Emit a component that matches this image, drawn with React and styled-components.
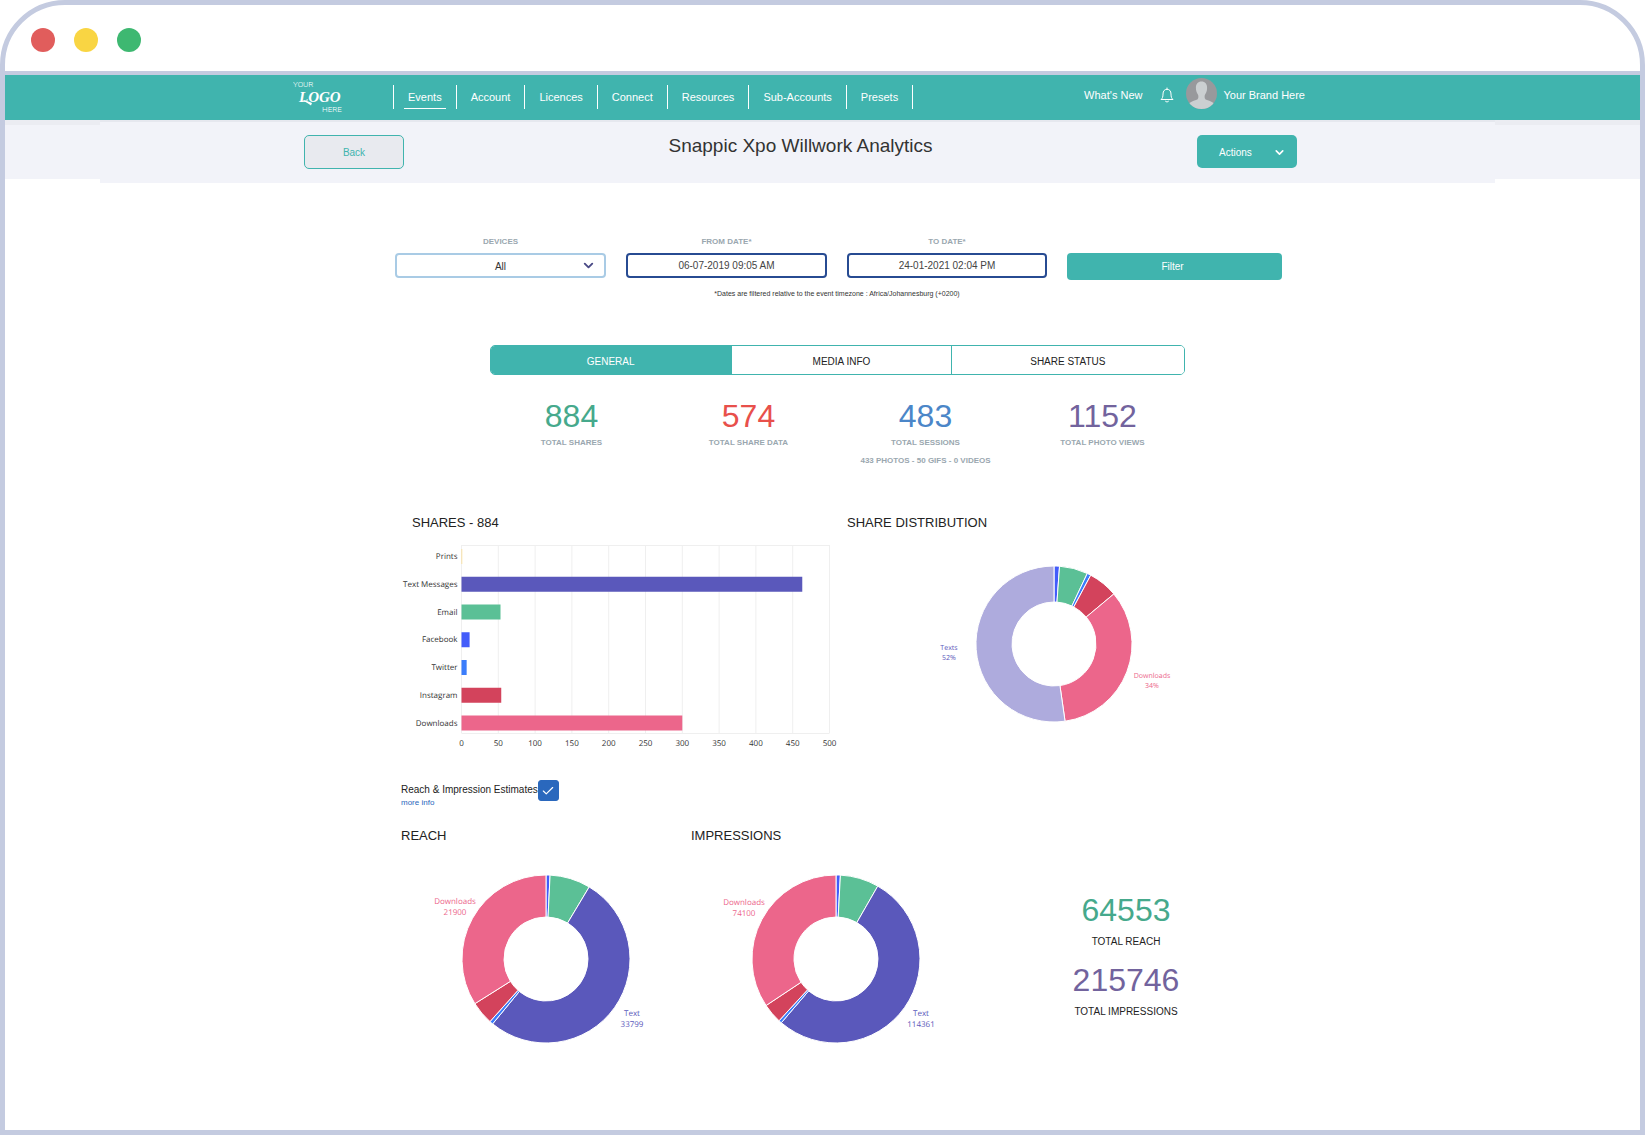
import React from "react";
import styled, { createGlobalStyle } from "styled-components";
import { Check, ChevronDown } from "lucide-react";

const GlobalStyle = createGlobalStyle`
  *,
  *::before,
  *::after {
    box-sizing: border-box;
  }
  body {
    margin: 0;
    background-color: white;
    color: #333;
    font-family: "Liberation Sans", Arial, sans-serif;
    font-size: 10px;
  }
  button,
  input,
  select {
    font: inherit;
  }
`;

const Frame = styled.div`
  display: flex;
  flex-direction: column;
  min-height: 100vh;
  border: 5px solid #c4cbe0;
  border-radius: 65px 65px 0 0;
  background-color: white;
`;

const WindowBar = styled.div`
  display: flex;
  align-items: center;
  column-gap: 19px;
  height: 70px;
  padding: 4px 0 0 26px;
  border-bottom: 4px solid #c4cbe0;
`;

const Dot = styled.span`
  width: 24px;
  height: 24px;
  border-radius: 100rem;
  background-color: ${(props) => props.$color};
`;

const Header = styled.header`
  background-color: #40b4ae;
  color: white;
  font-size: 11px;
`;

const HeaderInner = styled.div`
  display: flex;
  align-items: flex-start;
  max-width: 1059px;
  height: 45px;
  margin: 0 auto;
  padding: 3px 47px 0 0;
`;

const Logo = styled.svg`
  display: block;
  width: 50px;
  height: 36px;
  margin-right: 50px;
  flex-shrink: 0;
`;

const NavList = styled.ul`
  display: flex;
  margin: 7px 0 0;
  padding: 0;
  list-style: none;
  border-right: 1px solid white;
`;

const NavItem = styled.li`
  padding: 0 10px;
  border-left: 1px solid white;
`;

const NavLink = styled.a`
  display: block;
  height: 24px;
  padding: 0 4px;
  line-height: 24px;
  color: white;
  text-decoration: none;
  white-space: nowrap;
  border-bottom: 1px solid ${(props) => (props.$active ? "white" : "transparent")};
`;

const UserArea = styled.div`
  display: flex;
  align-items: center;
  margin-left: auto;
  white-space: nowrap;
`;

const TopLink = styled.a`
  padding-top: 2px;
  color: white;
  text-decoration: none;
`;

const IconButton = styled.button`
  display: flex;
  margin: 0 12px 0 18px;
  padding: 2px 0 0;
  border: 0;
  background: none;
  color: white;
`;

const Avatar = styled.svg`
  display: block;
  width: 31px;
  height: 31px;
  margin-right: 6px;
`;

const SubHeader = styled.div`
  display: grid;
  grid-template-columns: 95px 1fr 145px;
  align-items: start;
`;

const SubHeaderSide = styled.div`
  height: 59px;
  border-top: 5px solid #ebecf2;
  background-color: #f2f3f9;
`;

const SubHeaderMain = styled.div`
  padding: 13px 17px 14px 23px;
  border-top: 2px solid #e6e8ef;
  background-color: #f2f3f9;
`;

const SubHeaderRow = styled.div`
  display: grid;
  grid-template-columns: 100px 1fr 100px;
  align-items: start;
  max-width: 993px;
  margin: 0 auto;
`;

const PageTitle = styled.h1`
  margin: 0;
  font-size: 19px;
  font-weight: 300;
  line-height: 22px;
  text-align: center;
`;

const BackButton = styled.button`
  height: 34px;
  border: 1px solid #40b4ae;
  border-radius: 5px;
  background-color: #e8eaef;
  color: #40b4ae;
`;

const ActionsButton = styled.button`
  display: flex;
  align-items: center;
  justify-content: space-between;
  height: 33px;
  padding: 2px 11px 0 22px;
  border: 0;
  border-radius: 5px;
  background-color: #40b4ae;
  color: white;
`;

const Main = styled.main`
  width: 100%;
  max-width: 919px;
  margin: 0 auto;
  padding: 52px 0 50px 32px;
`;

const Filters = styled.form`
  display: grid;
  grid-template-columns: 211fr 201fr 200fr 215fr;
  column-gap: 20px;
  align-items: start;
`;

const Field = styled.div`
  display: flex;
  flex-direction: column;
  row-gap: 5px;
`;

const FieldLabel = styled.label`
  padding-top: 1px;
  font-size: 8px;
  font-weight: bold;
  line-height: 12px;
  color: #9aa7af;
  text-align: center;
`;

const TextInput = styled.input`
  width: 100%;
  height: 25px;
  padding: 0 8px;
  border: 2px solid #274b92;
  border-radius: 4px;
  background-color: white;
  color: #444;
  text-align: center;
`;

const SelectBox = styled.div`
  display: grid;
  align-items: center;

  > * {
    grid-area: 1 / 1;
  }

  svg {
    justify-self: end;
    margin-right: 10px;
    pointer-events: none;
  }
`;

const Select = styled.select`
  width: 100%;
  height: 25px;
  padding: 2px 8px 0;
  appearance: none;
  border: 2px solid #a9cbe5;
  border-radius: 4px;
  background-color: white;
  color: #333;
  text-align: center;
  text-align-last: center;
`;

const FilterButton = styled.button`
  height: 27px;
  margin-top: 18px;
  padding: 0 4px 0 0;
  border: 0;
  border-radius: 4px;
  background-color: #40b4ae;
  color: white;
`;

const Summary = styled.div`
  padding-right: 3px;
`;

const Note = styled.p`
  margin: 9px 0 0;
  font-size: 7px;
  line-height: 10px;
  text-align: center;
`;

const Tabs = styled.div`
  display: grid;
  grid-template-columns: 241fr 221fr 233fr;
  max-width: 695px;
  margin: 46px auto 0;
  border: 1px solid #40b4ae;
  border-radius: 5px;
  overflow: hidden;
`;

const Tab = styled.button`
  height: 28px;
  padding: 2px 0 0;
  border: 0;
  border-left: 1px solid #40b4ae;
  background-color: ${(props) => (props.$active ? "#40b4ae" : "white")};
  color: ${(props) => (props.$active ? "white" : "#222")};

  &:first-child {
    border-left: 0;
  }
`;

const Stats = styled.div`
  display: grid;
  grid-template-columns: repeat(4, 1fr);
  max-width: 708px;
  min-height: 69px;
  margin: 23px auto 0;
  text-align: center;
`;

const Amount = styled.div`
  font-size: 32px;
  line-height: 36px;
  color: ${(props) => props.$color};
`;

const StatLabel = styled.div`
  margin-top: 3px;
  font-size: 8px;
  font-weight: bold;
  line-height: 12px;
  color: #9aa7af;
`;

const StatDetail = styled(StatLabel)`
  margin-top: 6px;
`;

const ChartRow = styled.div`
  display: grid;
  grid-template-columns: 452fr 435fr;
  margin-top: 48px;
`;

const SectionTitle = styled.h2`
  margin: 0;
  padding-left: ${(props) => (props.$inset ? "17px" : "0")};
  font-size: 13px;
  font-weight: normal;
  line-height: 16px;
  color: #222;
`;

const Chart = styled.svg`
  display: block;
  overflow: visible;
  font-family: "Open Sans", "Noto Sans", sans-serif;
  font-size: ${(props) => (props.$small ? "7px" : "8px")};
  text-rendering: geometricPrecision;
`;

const Estimates = styled.div`
  display: flex;
  align-items: flex-start;
  margin-top: 25px;
  padding-left: 6px;
`;

const EstimatesText = styled.div`
  display: flex;
  flex-direction: column;
  padding-top: 2px;
`;

const EstimatesLabel = styled.label`
  line-height: 16px;
  color: #222;
`;

const MoreLink = styled.a`
  font-size: 8px;
  line-height: 10px;
  color: #2a68bd;
  text-decoration: none;
`;

const CheckBox = styled.div`
  display: grid;
  place-items: center;

  > * {
    grid-area: 1 / 1;
  }

  svg {
    color: white;
    pointer-events: none;
  }

  input:not(:checked) + svg {
    display: none;
  }
`;

const CheckInput = styled.input`
  width: 21px;
  height: 21px;
  margin: 0;
  appearance: none;
  border: 1px solid #2a68bd;
  border-radius: 3px;

  &:checked {
    background-color: #2a68bd;
  }
`;

const ReachRow = styled.div`
  display: grid;
  grid-template-columns: 290fr 290fr 290fr;
  margin-top: 20px;
  padding: 0 11px 0 6px;
`;

const Totals = styled.div`
  display: flex;
  flex-direction: column;
  row-gap: 14px;
  padding-top: 64px;
  text-align: center;
`;

const TotalLabel = styled.div`
  margin-top: 8px;
  line-height: 12px;
  color: #222;
`;

const colors = {
  prints: "#fbdc8c",
  texts: "#5a58bb",
  textsLight: "#aeabdd",
  email: "#5bc096",
  facebook: "#435cfa",
  twitter: "#3b7dfb",
  instagram: "#d3435c",
  downloads: "#ec668b",
};

const navLinks = [
  "Events",
  "Account",
  "Licences",
  "Connect",
  "Resources",
  "Sub-Accounts",
  "Presets",
];

const stats = [
  { value: 884, label: "TOTAL SHARES", color: "#46a98c" },
  { value: 574, label: "TOTAL SHARE DATA", color: "#e8504b" },
  {
    value: 483,
    label: "TOTAL SESSIONS",
    color: "#4b86c8",
    detail: "433 PHOTOS - 50 GIFS - 0 VIDEOS",
  },
  { value: 1152, label: "TOTAL PHOTO VIEWS", color: "#72639d" },
];

const bars = [
  { name: "Prints", value: 1, color: colors.prints },
  { name: "Text Messages", value: 463, color: colors.texts },
  { name: "Email", value: 53, color: colors.email },
  { name: "Facebook", value: 11, color: colors.facebook },
  { name: "Twitter", value: 7, color: colors.twitter },
  { name: "Instagram", value: 54, color: colors.instagram },
  { name: "Downloads", value: 300, color: colors.downloads },
];

const distribution = [
  { value: 10, color: colors.facebook },
  { value: 52, color: colors.email },
  { value: 7, color: colors.twitter },
  { value: 54, color: colors.instagram },
  { value: 299, color: colors.downloads },
  { value: 462, color: colors.textsLight },
];

const reach = [
  { value: 500, color: colors.facebook },
  { value: 5050, color: colors.email },
  { value: 33799, color: colors.texts },
  { value: 430, color: colors.twitter },
  { value: 2874, color: colors.instagram },
  { value: 21900, color: colors.downloads },
];

const impressions = [
  { value: 1800, color: colors.facebook },
  { value: 16060, color: colors.email },
  { value: 114361, color: colors.texts },
  { value: 1250, color: colors.twitter },
  { value: 8175, color: colors.instagram },
  { value: 74100, color: colors.downloads },
];

const point = (cx, cy, r, turn) => {
  const a = turn * Math.PI * 2;
  return `${(cx + r * Math.sin(a)).toFixed(2)} ${(cy - r * Math.cos(a)).toFixed(2)}`;
};

const slicePath = (cx, cy, outer, inner, from, to) => {
  const large = to - from > 0.5 ? 1 : 0;
  return [
    `M${point(cx, cy, outer, from)}`,
    `A${outer} ${outer} 0 ${large} 1 ${point(cx, cy, outer, to)}`,
    `L${point(cx, cy, inner, to)}`,
    `A${inner} ${inner} 0 ${large} 0 ${point(cx, cy, inner, from)}Z`,
  ].join("");
};

const Donut = ({ data, cx, cy, outer, inner, width, height, labels, small, title }) => {
  const total = data.reduce((sum, item) => sum + item.value, 0);
  const lineHeight = small ? 10 : 11;
  let turn = 0;

  return (
    <Chart width={width} height={height} $small={small} role="img" aria-label={title}>
      {data.map((item) => {
        const from = turn;
        turn += item.value / total;
        return (
          <path
            key={item.color}
            d={slicePath(cx, cy, outer, inner, from, turn)}
            fill={item.color}
            stroke="white"
            strokeWidth="1"
          />
        );
      })}
      {labels.map((label) => (
        <text key={label.name} fill={label.color} textAnchor="middle">
          <tspan x={label.x} y={label.y}>
            {label.name}
          </tspan>
          <tspan x={label.x} y={label.y + lineHeight}>
            {label.value}
          </tspan>
        </text>
      ))}
    </Chart>
  );
};

const BarChart = () => {
  const left = 66.5;
  const top = 14;
  const plotWidth = 368;
  const plotHeight = 188;
  const ticks = Array.from({ length: 11 }, (_, i) => i * 50);
  const scale = (value) => (value / 500) * plotWidth;

  return (
    <Chart width="450" height="224" role="img" aria-label="Shares by channel">
      <path
        d={`M${left} ${top + 0.5}h${plotWidth}M${left} ${top + plotHeight + 0.5}h${plotWidth}`}
        stroke="#efefef"
      />
      {ticks.map((tick) => (
        <g key={tick}>
          <line
            x1={left + scale(tick)}
            x2={left + scale(tick)}
            y1={top}
            y2={top + plotHeight}
            stroke="#efefef"
          />
          <text x={left + scale(tick)} y="215" textAnchor="middle" fill="#333">
            {tick}
          </text>
        </g>
      ))}
      {bars.map((bar, i) => {
        const y = top + 4 + i * 27.75;
        return (
          <g key={bar.name}>
            <rect x={left} y={y} width={scale(bar.value)} height="15" fill={bar.color} />
            <text x={left - 4} y={y + 10} textAnchor="end" fill="#333">
              {bar.name}
            </text>
          </g>
        );
      })}
    </Chart>
  );
};

const BrandLogo = () => (
  <Logo viewBox="0 0 50 36" role="img" aria-label="Your logo here" fill="white">
    <text x="0" y="9" fontFamily="Roboto, sans-serif" fontSize="8" fontWeight="300">
      YOUR
    </text>
    <text
      x="6"
      y="24"
      fontFamily="'Liberation Serif', serif"
      fontSize="15"
      fontWeight="bold"
      fontStyle="italic"
    >
      LOGO
    </text>
    <path d="M7 22.500c3-1 5 1 11 5l1-2.500c-4-1-7-4-12-2.500z" />
    <text x="29" y="34" fontFamily="Roboto, sans-serif" fontSize="8" fontWeight="300">
      HERE
    </text>
  </Logo>
);

const BellIcon = () => (
  <svg width="14" height="16" viewBox="0 0 14 16" fill="none" stroke="currentColor">
    <path d="M1 12.5h12c-1.500-1.300-2-2.600-2-5.500 0-3-1.600-4.700-4-4.700S3 4 3 7c0 2.900-.5 4.200-2 5.500z" />
    <path d="M7 2.300V1M5.500 14.300c.8.900 2.200.9 3 0" strokeLinecap="round" />
  </svg>
);

const UserAvatar = () => (
  <Avatar viewBox="0 0 31 31" aria-hidden="true">
    <defs>
      <clipPath id="avatar-clip">
        <circle cx="15.500" cy="15.500" r="15.500" />
      </clipPath>
    </defs>
    <g clipPath="url(#avatar-clip)">
      <rect width="31" height="31" fill="#98999c" />
      <path
        d="M15.500 3.500c3.600 0 5.700 2.600 5.600 6.500-.1 3.300-1 5.300-2.300 6.900-.5 2.900-.1 4.300 2.200 5.200 3.200 1.200 6 2 7.500 3.900V31h-26v-5c1.500-1.900 4.300-2.700 7.500-3.900 2.300-.9 2.700-2.300 2.200-5.200-1.300-1.600-2.200-3.600-2.300-6.900-.1-3.900 2-6.500 5.600-6.500z"
        fill="#cbcfd1"
      />
    </g>
  </Avatar>
);

const App = () => {
  return (
    <>
      <GlobalStyle />
      <Frame>
        <WindowBar>
          <Dot $color="#e15d5c" />
          <Dot $color="#f9d543" />
          <Dot $color="#3eb871" />
        </WindowBar>

        <Header>
          <HeaderInner>
            <BrandLogo />
            <nav>
              <NavList>
                {navLinks.map((name, i) => (
                  <NavItem key={name}>
                    <NavLink href="#" $active={i === 0}>
                      {name}
                    </NavLink>
                  </NavItem>
                ))}
              </NavList>
            </nav>
            <UserArea>
              <TopLink href="#">What's New</TopLink>
              <IconButton type="button" aria-label="Notifications">
                <BellIcon />
              </IconButton>
              <UserAvatar />
              <TopLink href="#">Your Brand Here</TopLink>
            </UserArea>
          </HeaderInner>
        </Header>

        <SubHeader>
          <SubHeaderSide />
          <SubHeaderMain>
            <SubHeaderRow>
              <BackButton type="button">Back</BackButton>
              <PageTitle>Snappic Xpo Willwork Analytics</PageTitle>
              <ActionsButton type="button">
                Actions
                <ChevronDown size={13} strokeWidth={3} />
              </ActionsButton>
            </SubHeaderRow>
          </SubHeaderMain>
          <SubHeaderSide />
        </SubHeader>

        <Main>
          <Filters onSubmit={(e) => e.preventDefault()}>
            <Field>
              <FieldLabel htmlFor="devices">DEVICES</FieldLabel>
              <SelectBox>
                <Select id="devices">
                  <option>All</option>
                </Select>
                <ChevronDown size={15} strokeWidth={3} color="#4a4a86" />
              </SelectBox>
            </Field>
            <Field>
              <FieldLabel htmlFor="from">FROM DATE*</FieldLabel>
              <TextInput id="from" type="text" defaultValue="06-07-2019 09:05 AM" />
            </Field>
            <Field>
              <FieldLabel htmlFor="to">TO DATE*</FieldLabel>
              <TextInput id="to" type="text" defaultValue="24-01-2021 02:04 PM" />
            </Field>
            <FilterButton type="submit">Filter</FilterButton>
          </Filters>

          <Summary>
            <Note>
              *Dates are filtered relative to the event timezone : Africa/Johannesburg (+0200)
            </Note>

            <Tabs>
              <Tab type="button" $active>
                GENERAL
              </Tab>
              <Tab type="button">MEDIA INFO</Tab>
              <Tab type="button">SHARE STATUS</Tab>
            </Tabs>

            <Stats>
              {stats.map((stat) => (
                <div key={stat.label}>
                  <Amount $color={stat.color}>{stat.value}</Amount>
                  <StatLabel>{stat.label}</StatLabel>
                  {stat.detail && <StatDetail>{stat.detail}</StatDetail>}
                </div>
              ))}
            </Stats>
          </Summary>

          <ChartRow>
            <section>
              <SectionTitle $inset>SHARES - 884</SectionTitle>
              <BarChart />
            </section>
            <section>
              <SectionTitle>SHARE DISTRIBUTION</SectionTitle>
              <Donut
                title="Share distribution"
                data={distribution}
                small
                width={435}
                height={224}
                cx={207}
                cy={113}
                outer={78}
                inner={42}
                labels={[
                  { name: "Texts", value: "52%", x: 102, y: 119, color: colors.texts },
                  { name: "Downloads", value: "34%", x: 305, y: 147, color: colors.downloads },
                ]}
              />
            </section>
          </ChartRow>

          <Estimates>
            <EstimatesText>
              <EstimatesLabel htmlFor="estimates">Reach &amp; Impression Estimates</EstimatesLabel>
              <MoreLink href="#">more info</MoreLink>
            </EstimatesText>
            <CheckBox>
              <CheckInput id="estimates" type="checkbox" defaultChecked />
              <Check size={14} strokeWidth={2} />
            </CheckBox>
          </Estimates>

          <ReachRow>
            <section>
              <SectionTitle>REACH</SectionTitle>
              <Donut
                title="Reach"
                data={reach}
                width={290}
                height={220}
                cx={145}
                cy={115}
                outer={84}
                inner={42}
                labels={[
                  { name: "Downloads", value: 21900, x: 54, y: 60, color: colors.downloads },
                  { name: "Text", value: 33799, x: 231, y: 172, color: colors.texts },
                ]}
              />
            </section>
            <section>
              <SectionTitle>IMPRESSIONS</SectionTitle>
              <Donut
                title="Impressions"
                data={impressions}
                width={290}
                height={220}
                cx={145}
                cy={115}
                outer={84}
                inner={42}
                labels={[
                  { name: "Downloads", value: 74100, x: 53, y: 61, color: colors.downloads },
                  { name: "Text", value: 114361, x: 230, y: 172, color: colors.texts },
                ]}
              />
            </section>
            <Totals>
              <div>
                <Amount $color="#46a98c">64553</Amount>
                <TotalLabel>TOTAL REACH</TotalLabel>
              </div>
              <div>
                <Amount $color="#72639d">215746</Amount>
                <TotalLabel>TOTAL IMPRESSIONS</TotalLabel>
              </div>
            </Totals>
          </ReachRow>
        </Main>
      </Frame>
    </>
  );
};

export default App;
